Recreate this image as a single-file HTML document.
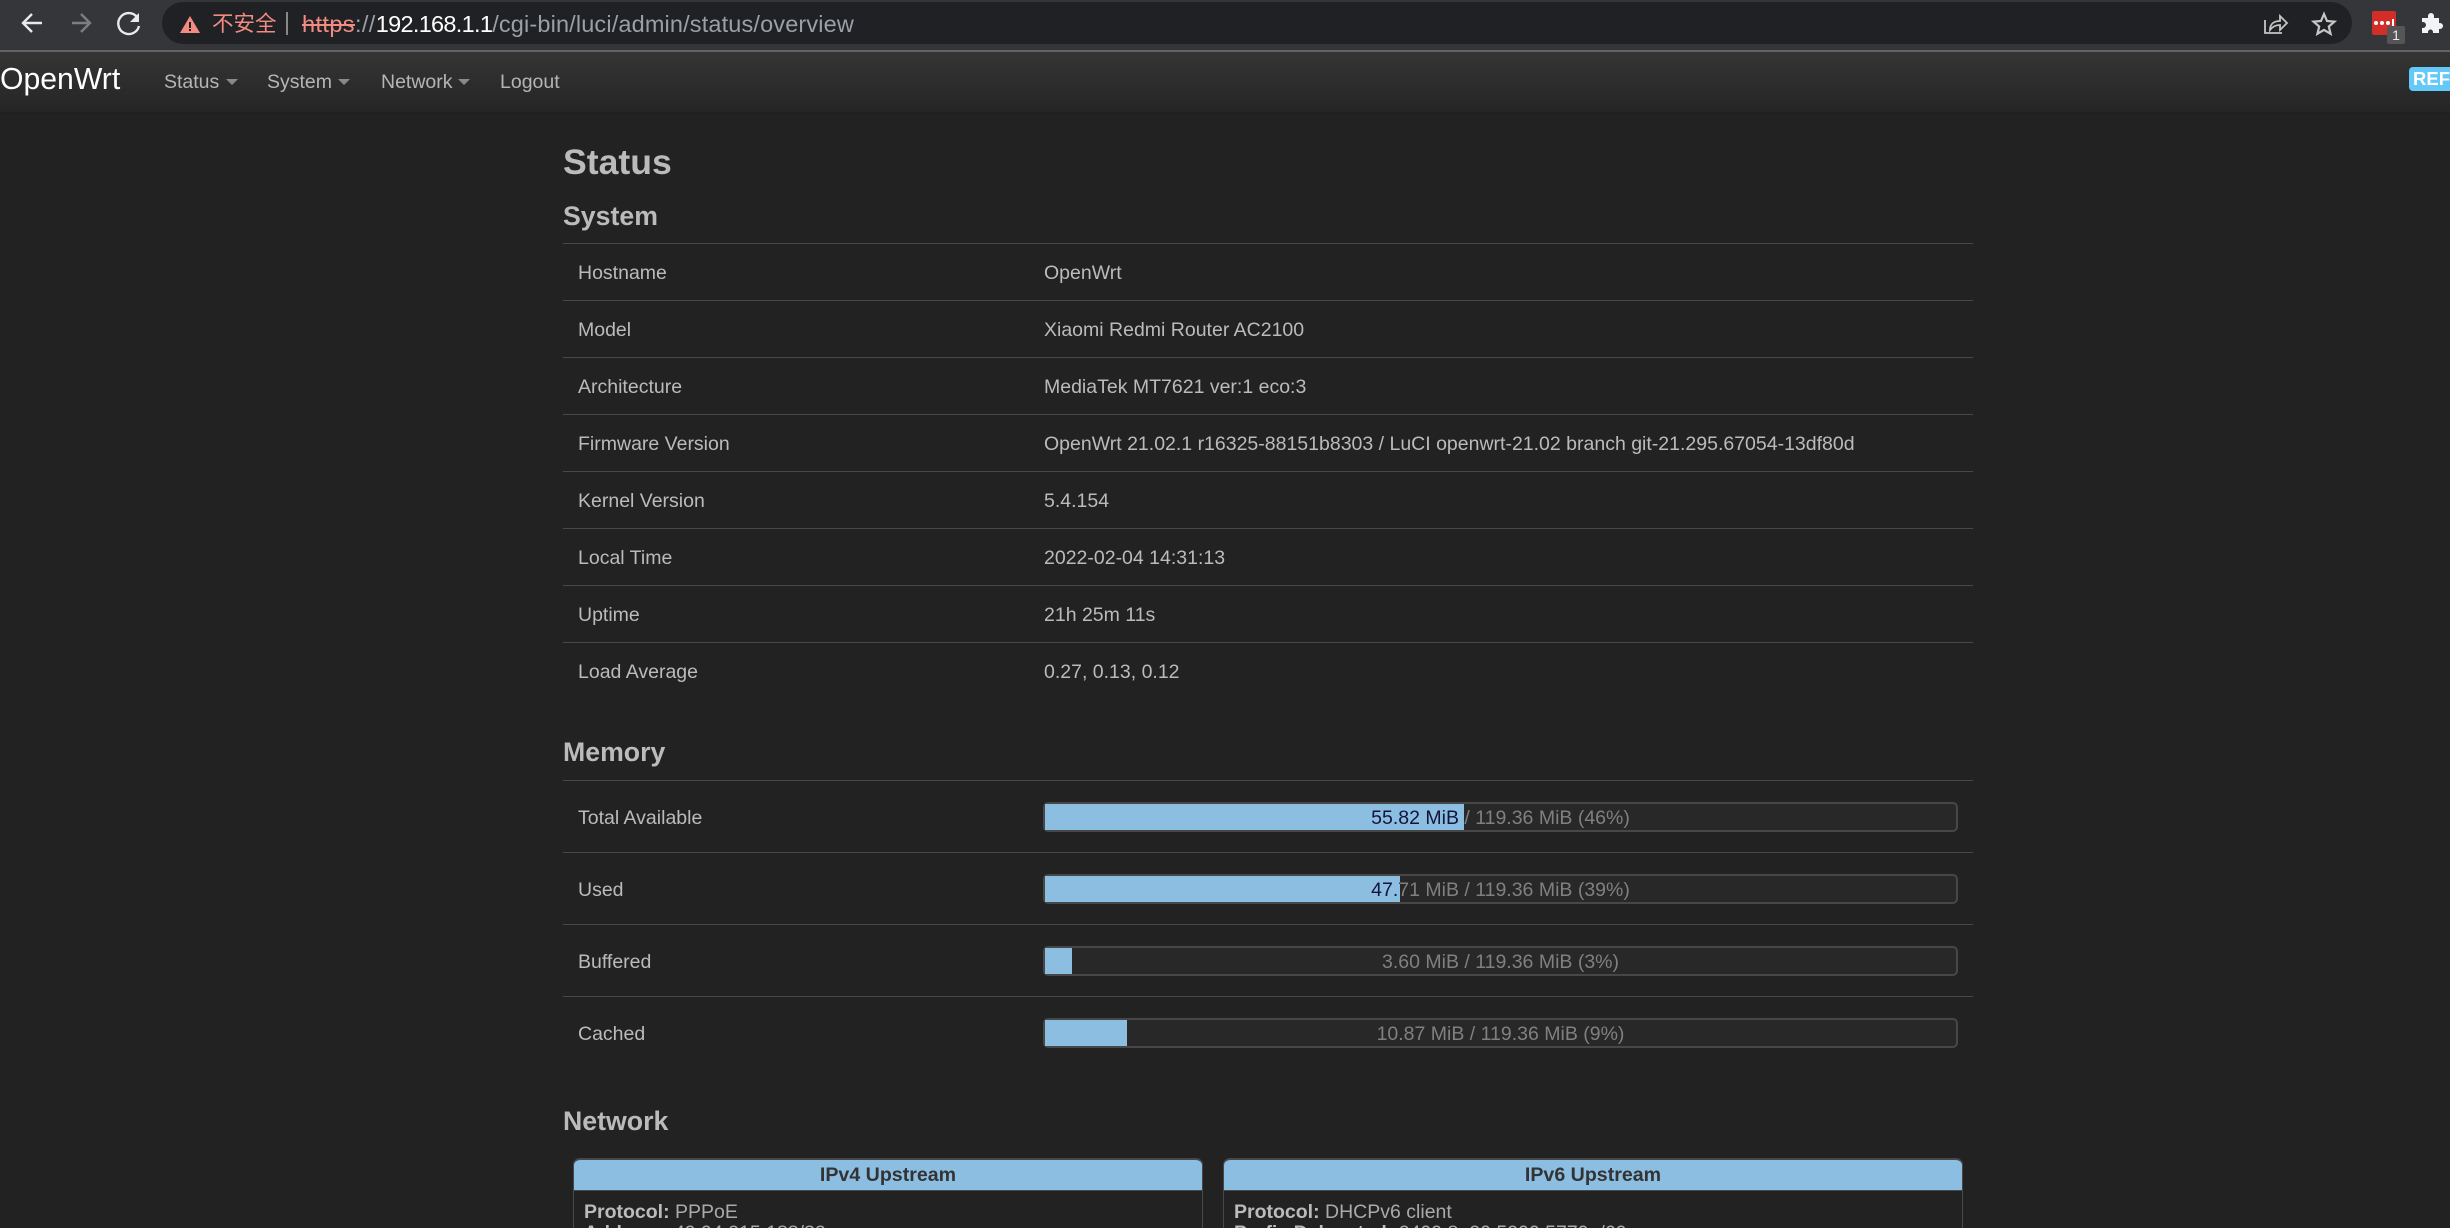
<!DOCTYPE html>
<html><head><meta charset="utf-8"><title>OpenWrt - Overview</title>
<style>
html,body{margin:0;padding:0;width:2450px;height:1228px;overflow:hidden;background:#222;font-family:"Liberation Sans",sans-serif;}
#w{position:relative;width:2450px;height:1228px;overflow:hidden;background:#222;}
.a{position:absolute;white-space:pre;line-height:30px;height:30px;}
.l{font-size:19.5px;color:#bbb;}
.h2{font-size:26.7px;font-weight:bold;color:#bbb;}
.hr{position:absolute;left:563px;width:1410px;height:1px;background:#484848;}
.bar{position:absolute;left:1043px;width:915px;height:30px;box-sizing:border-box;border:2px solid #474747;border-radius:5px;background:#282828;}
.bt{position:absolute;left:0;top:0;width:911px;height:26px;line-height:28px;text-align:center;font-size:19.5px;color:#808080;white-space:pre;}
.f{position:absolute;left:0;top:0;height:26px;background:#8cbee2;overflow:hidden;}
.f .bt{color:#14143a;}
.box{position:absolute;top:1158px;height:70px;box-sizing:border-box;border:1px solid #484848;border-top:2px solid #484848;border-bottom:0;border-radius:7px 7px 0 0;overflow:hidden;}
.bh{height:30px;line-height:30px;background:#8cbee2;color:#333;font-size:19.6px;font-weight:bold;text-align:center;border-bottom:1px solid #484848;}
.p{font-size:19.5px;color:#aaa;}
.p b{color:#bbb;}
</style></head><body><div id="w">
<div style="position:absolute;left:0;top:0;width:2450px;height:50px;background:#35363a"></div>
<div style="position:absolute;left:0;top:50px;width:2450px;height:2px;background:#626365"></div>
<div style="position:absolute;left:162px;top:2px;width:2190px;height:42px;border-radius:21px;background:#202124"></div>
<svg style="position:absolute;left:0;top:0" width="150" height="50" fill="none">
<path d="M42 23H24M32 14l-9 9 9 9" stroke="#e8eaed" stroke-width="2.4"/>
<path d="M72 23H90M81 14l9 9-9 9" stroke="#7d7e80" stroke-width="2.4"/>
<path d="M137 17a10.500 10.500 0 1 0 2 9" stroke="#e8eaed" stroke-width="2.4"/>
<path d="M139 13v9h-9z" fill="#e8eaed"/>
</svg>
<svg style="position:absolute;left:178px;top:13px" width="24" height="22"><path d="M12 3l10 17H2z" fill="#f28b82"/><path d="M11 9h2v6h-2zM11 16h2v2h-2z" fill="#202124"/></svg>
<div class="a" style="left:212px;top:8px;font:21.500px/30px 'Noto Sans CJK SC',sans-serif;color:#f28b82">不安全</div>
<div style="position:absolute;left:286px;top:12px;width:2px;height:23px;background:#888"></div>
<div class="a" style="left:302px;top:8.500px;font-size:23.500px;color:#9aa0a6"><span style="letter-spacing:.4px"><span style="color:#f28b82;text-decoration:line-through">https</span>://</span><span style="color:#fff;letter-spacing:-.7px">192.168.1.1</span><span style="letter-spacing:.15px">/cgi-bin/luci/admin/status/overview</span></div>
<svg style="position:absolute;left:2262px;top:12px" width="28" height="24" fill="none" stroke="#c4c7c5" stroke-width="1.800"><path d="M3 8v13h17"/><path d="M8 18c0-6 4-9 10-9V4l7 7-7 7v-5c-4 0-7 1-10 5z"/></svg>
<svg style="position:absolute;left:2311px;top:11px" width="26" height="25" fill="none" stroke="#c4c7c5" stroke-width="2.200"><path d="M13 3l3 7 7.500 .6-5.700 4.900 1.800 7.300L13 18.900 6.400 22.800l1.800-7.300L2.500 10.600 10 10z"/></svg>
<div style="position:absolute;left:2372px;top:11px;width:24px;height:24px;border-radius:2px;background:#d32d27"></div>
<svg style="position:absolute;left:2372px;top:11px" width="24" height="24"><circle cx="4" cy="12" r="2" fill="#fff"/><circle cx="10" cy="12" r="2" fill="#fff"/><circle cx="16" cy="12" r="2" fill="#fff"/><rect x="20" y="8" width="2" height="8" fill="#fff"/></svg>
<div style="position:absolute;left:2387px;top:26px;width:18px;height:18px;border-radius:2px;background:#555;color:#e8eaed;font-size:14px;line-height:18px;text-align:center">1</div>
<svg style="position:absolute;left:2420px;top:12px" width="24" height="22"><path d="M2 6h6V4a3 3 0 0 1 6 0v2h5v5h1a3 3 0 0 1 0 6h-1v4h-6v-1a2.500 2.500 0 0 0-5 0v1H2v-5h1a3 3 0 0 0 0-6H2z" fill="#f1f3f4"/></svg>

<div style="position:absolute;left:0;top:52px;width:2450px;height:60px;background:linear-gradient(#353535,#252525)"></div>
<div style="position:absolute;left:0;top:112px;width:2450px;height:2px;background:#202020"></div>
<div class="a" style="left:0;top:65px;font-size:30.200px;color:#fff">OpenWrt</div>
<div class="a l" style="left:164px;top:67px;color:#b5b5b5">Status</div>
<div class="a l" style="left:267px;top:67px;color:#b5b5b5">System</div>
<div class="a l" style="left:381px;top:67px;color:#b5b5b5">Network</div>
<div class="a l" style="left:500px;top:67px;color:#b5b5b5">Logout</div>
<svg style="position:absolute;left:0;top:76px" width="480" height="12" fill="#8a8a8a"><path d="M226 3h12l-6 6zM338 3h12l-6 6zM458 3h12l-6 6z"/></svg>
<div style="position:absolute;left:2409px;top:67px;width:60px;height:24px;border-radius:4px;background:#62c9f8;color:#fff;font:bold 18.500px/24px 'Liberation Sans';padding-left:4px;box-sizing:border-box">REF</div>

<div class="a" style="left:563px;top:146.500px;font-size:35.600px;font-weight:bold;color:#bbb">Status</div>
<div class="a h2" style="left:563px;top:201px">System</div>
<div class="hr" style="top:243px"></div><div class="hr" style="top:300px"></div><div class="hr" style="top:357px"></div><div class="hr" style="top:414px"></div><div class="hr" style="top:471px"></div><div class="hr" style="top:528px"></div><div class="hr" style="top:585px"></div><div class="hr" style="top:642px"></div>
<div class="a l" style="left:578px;top:258px">Hostname</div><div class="a l" style="left:1044px;top:258px">OpenWrt</div>
<div class="a l" style="left:578px;top:315px">Model</div><div class="a l" style="left:1044px;top:315px">Xiaomi Redmi Router AC2100</div>
<div class="a l" style="left:578px;top:372px">Architecture</div><div class="a l" style="left:1044px;top:372px">MediaTek MT7621 ver:1 eco:3</div>
<div class="a l" style="left:578px;top:429px">Firmware Version</div><div class="a l" style="left:1044px;top:429px">OpenWrt 21.02.1 r16325-88151b8303 / LuCI openwrt-21.02 branch git-21.295.67054-13df80d</div>
<div class="a l" style="left:578px;top:486px">Kernel Version</div><div class="a l" style="left:1044px;top:486px">5.4.154</div>
<div class="a l" style="left:578px;top:543px">Local Time</div><div class="a l" style="left:1044px;top:543px">2022-02-04 14:31:13</div>
<div class="a l" style="left:578px;top:600px">Uptime</div><div class="a l" style="left:1044px;top:600px">21h 25m 11s</div>
<div class="a l" style="left:578px;top:657px">Load Average</div><div class="a l" style="left:1044px;top:657px">0.27, 0.13, 0.12</div>

<div class="a h2" style="left:563px;top:737px">Memory</div>
<div class="hr" style="top:780px"></div><div class="hr" style="top:852px"></div><div class="hr" style="top:924px"></div><div class="hr" style="top:996px"></div>
<div class="a l" style="left:578px;top:803px">Total Available</div>
<div class="a l" style="left:578px;top:875px">Used</div>
<div class="a l" style="left:578px;top:947px">Buffered</div>
<div class="a l" style="left:578px;top:1019px">Cached</div>
<div class="bar" style="top:802px"><div class="bt">55.82 MiB / 119.36 MiB (46%)</div><div class="f" style="width:419px"><div class="bt">55.82 MiB / 119.36 MiB (46%)</div></div></div>
<div class="bar" style="top:874px"><div class="bt">47.71 MiB / 119.36 MiB (39%)</div><div class="f" style="width:355px"><div class="bt">47.71 MiB / 119.36 MiB (39%)</div></div></div>
<div class="bar" style="top:946px"><div class="bt">3.60 MiB / 119.36 MiB (3%)</div><div class="f" style="width:27px"></div></div>
<div class="bar" style="top:1018px"><div class="bt">10.87 MiB / 119.36 MiB (9%)</div><div class="f" style="width:82px"></div></div>

<div class="a h2" style="left:563px;top:1106px">Network</div>
<div class="box" style="left:573px;width:630px"><div class="bh">IPv4 Upstream</div></div>
<div class="box" style="left:1223px;width:740px"><div class="bh">IPv6 Upstream</div></div>
<div class="a p" style="left:584px;top:1197px"><b>Protocol:</b> PPPoE</div>
<div class="a p" style="left:584px;top:1218px"><b>Address:</b> 49.94.215.188/32</div>
<div class="a p" style="left:1234px;top:1197px"><b>Protocol:</b> DHCPv6 client</div>
<div class="a p" style="left:1234px;top:1218px"><b>Prefix Delegated:</b> 2409:8a20:5200:5770::/60</div>
</div></body></html>
